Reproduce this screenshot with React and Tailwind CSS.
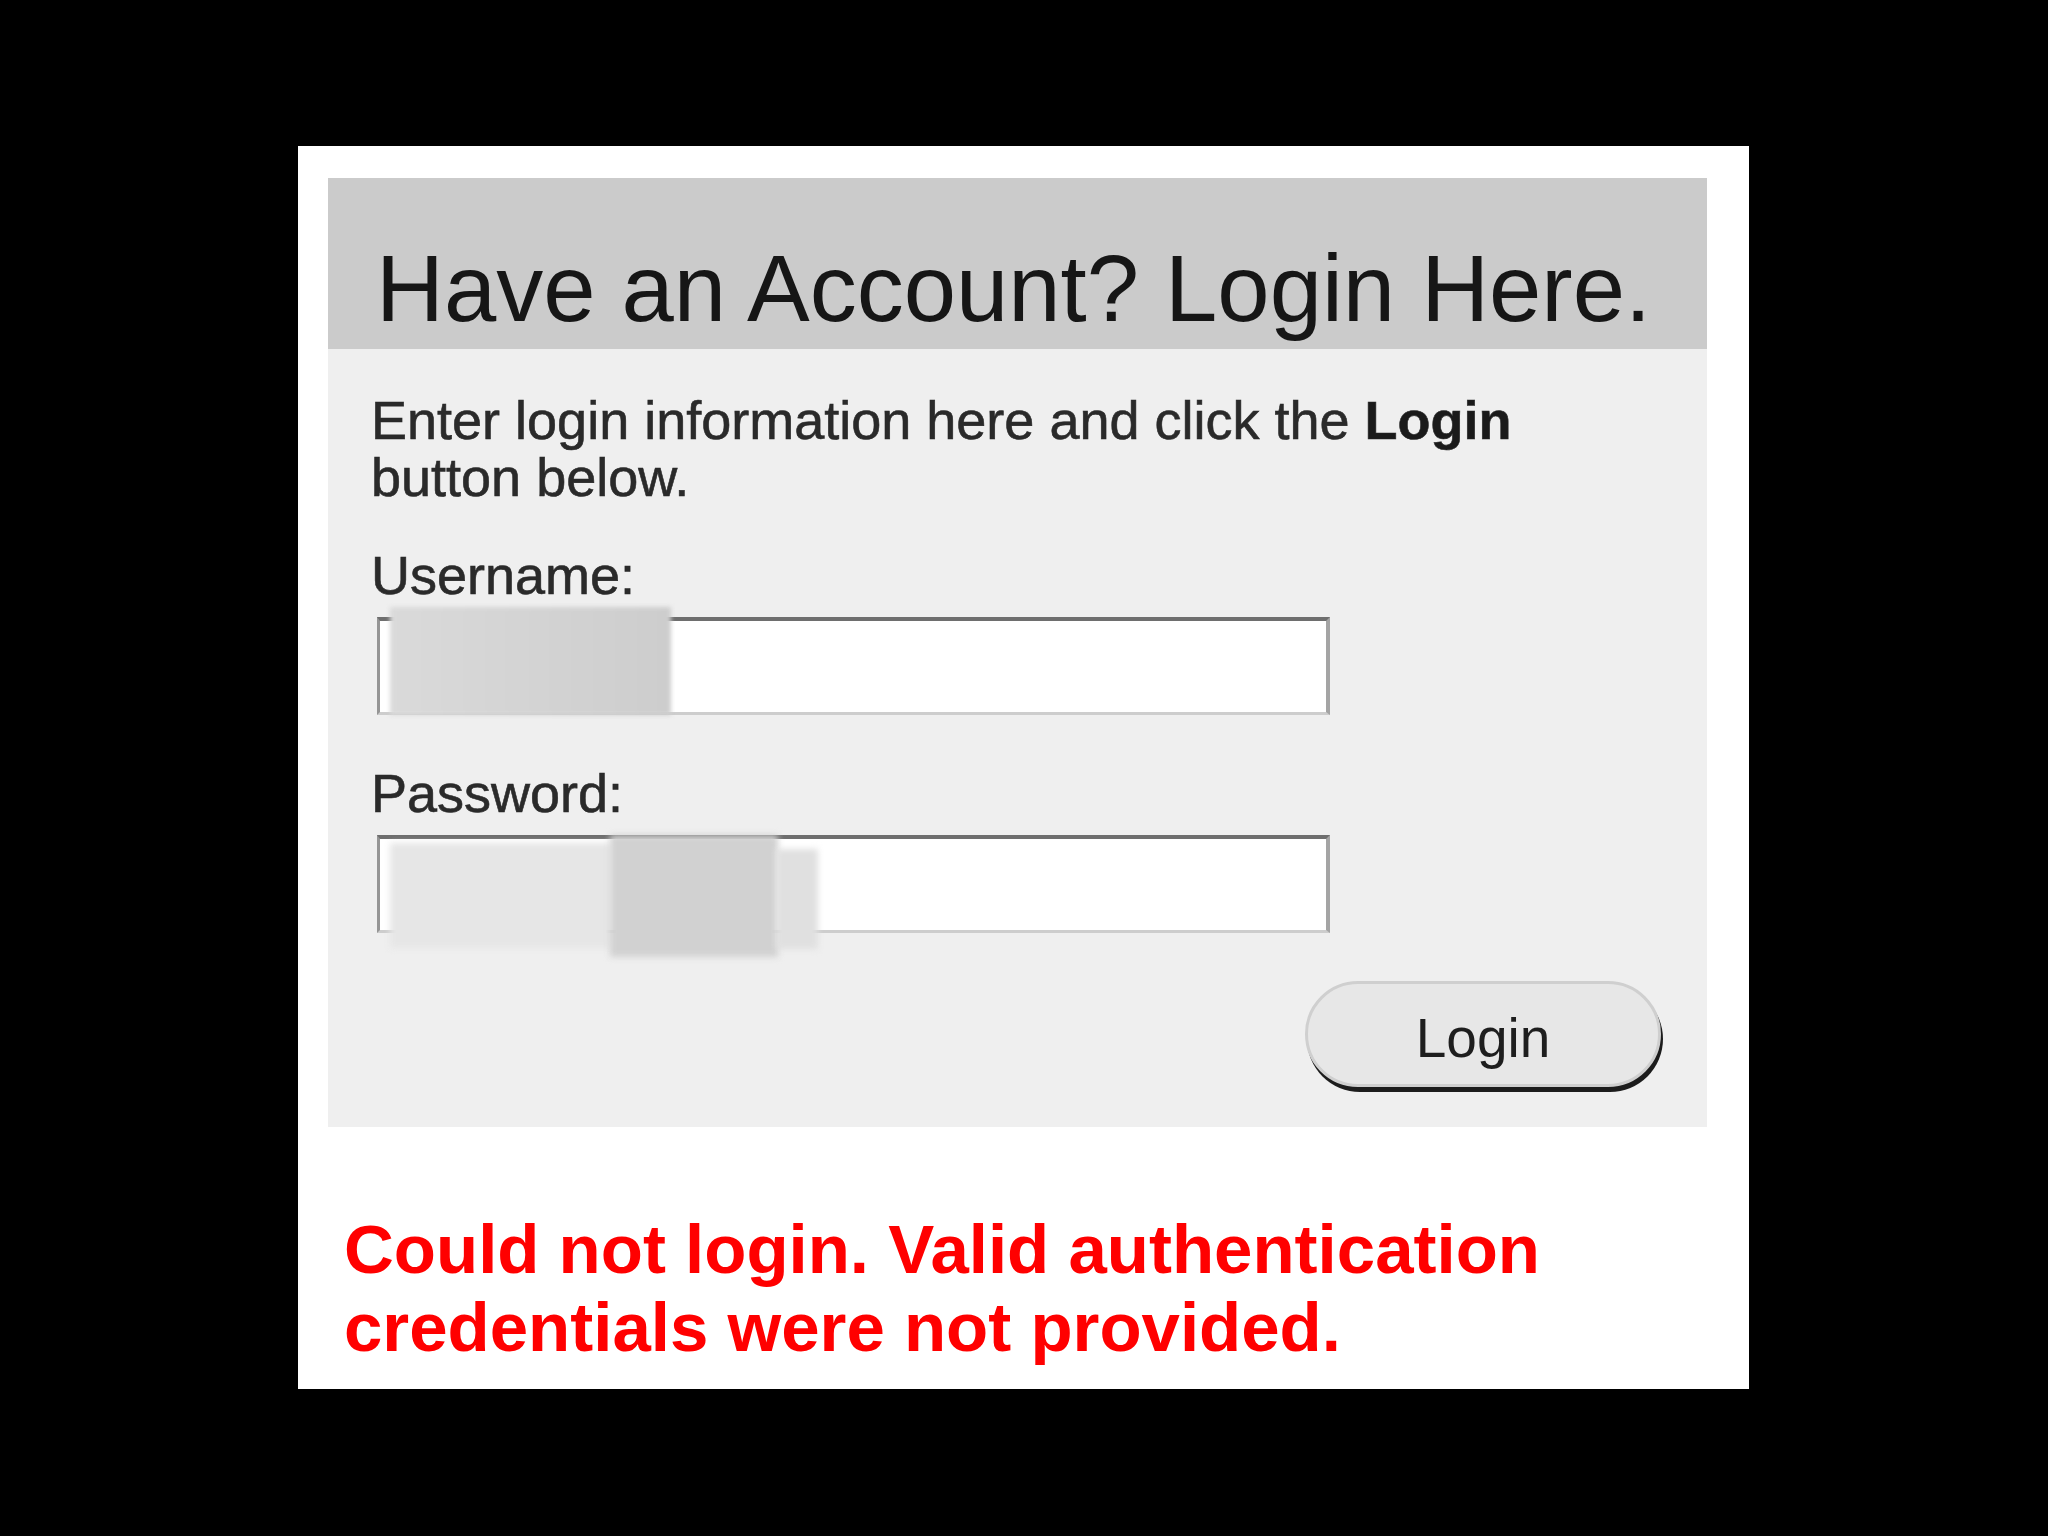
import React from "react";

// Login panel with an error message below it
function Field({ label, children }) {
  return (
    <div className="flex flex-col">
      <label className="text-[54px] leading-[57px] text-[#2a2a2a] [-webkit-text-stroke:0.6px_#2a2a2a]">{label}</label>
      <div className="relative mt-[13px] ml-[6px] w-[953px] h-[98px]">
        <input
          type="text"
          readOnly
          className="w-full h-full bg-white border-t-[4px] border-t-[#6e6e6e] border-l-[3px] border-l-[#959595] border-r-[4px] border-r-[#a4a4a4] border-b-[3px] border-b-[#cdcdcd] outline-none"
        />
        {children}
      </div>
    </div>
  );
}

export default function App() {
  return (
    <div className="min-h-screen bg-black pt-[146px] pl-[298px] font-['Liberation_Sans',Arial,sans-serif]">
      <div className="w-[1451px] bg-white pt-[32px] pb-[22px]">
        <div className="ml-[30px] w-[1379px] bg-[#efefef]">
          {/* header band */}
          <div className="bg-[#cbcbcb] h-[171px] pl-[48px] pt-[64px]">
            <h1 className="text-[94px] leading-none text-[#161616] whitespace-nowrap">Have an Account? Login Here.</h1>
          </div>

          <div className="pl-[43px] pr-[40px] pt-[43px] pb-[40px]">
            <p className="max-w-[1180px] text-[54px] leading-[57px] text-[#2a2a2a] [-webkit-text-stroke:0.6px_#2a2a2a]">
              Enter login information here and click the <b className="font-bold text-[#1a1a1a]">Login</b> button below.
            </p>

            <div className="mt-[41px]">
              <Field label="Username:">
                <div className="absolute left-[13px] top-[-10px] w-[281px] h-[108px] bg-gradient-to-r from-[#dadada] to-[#cdcdcd] blur-[2px]" />
              </Field>
            </div>

            <div className="mt-[50px]">
              <Field label="Password:">
                <div className="absolute left-[13px] top-[8px] w-[222px] h-[105px] bg-[#e6e6e6] blur-[3px]" />
                <div className="absolute left-[233px] top-[0px] w-[168px] h-[122px] bg-[#d1d1d1] blur-[3px]" />
                <div className="absolute left-[399px] top-[14px] w-[42px] h-[100px] bg-[#e0e0e0] blur-[3px]" />
              </Field>
            </div>

            <div className="flex justify-end mt-[48px] pr-[6px]">
              <button className="w-[356px] h-[106px] rounded-full bg-[#e7e7e7] border-[3px] border-[#cfcfcf] shadow-[2px_5px_0_0_#1c1c1c] text-[55px] leading-none text-[#1e1e1e] pt-[8px]">
                Login
              </button>
            </div>
          </div>
        </div>

        <p className="mt-[84px] ml-[46px] w-[1280px] text-[69px] leading-[78px] font-bold text-[#ff0000]">
          Could not login. Valid authentication credentials were not provided.
        </p>
      </div>
    </div>
  );
}
